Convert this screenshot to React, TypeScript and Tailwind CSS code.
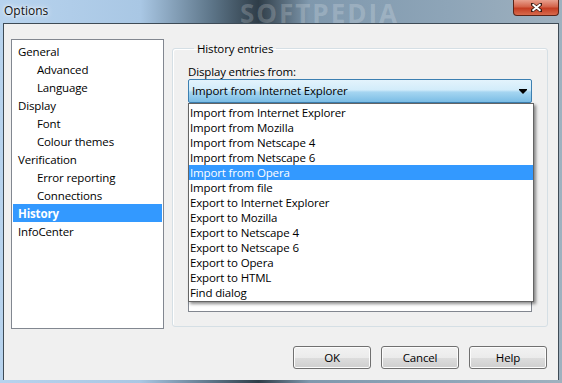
const treeItems = [
  { label: "General", indent: false },
  { label: "Advanced", indent: true },
  { label: "Language", indent: true },
  { label: "Display", indent: false },
  { label: "Font", indent: true },
  { label: "Colour themes", indent: true },
  { label: "Verification", indent: false },
  { label: "Error reporting", indent: true },
  { label: "Connections", indent: true },
  { label: "History", indent: false, selected: true },
  { label: "InfoCenter", indent: false },
]

const listItems = [
  "Import from Internet Explorer",
  "Import from Mozilla",
  "Import from Netscape 4",
  "Import from Netscape 6",
  "Import from Opera",
  "Import from file",
  "Export to Internet Explorer",
  "Export to Mozilla",
  "Export to Netscape 4",
  "Export to Netscape 6",
  "Export to Opera",
  "Export to HTML",
  "Find dialog",
]

const font = { fontFamily: '"Open Sans", "Noto Sans", sans-serif' }

const WinButton = ({ label }: { label: string }) => (
  <button className="w-[78px] h-[23px] rounded-[3px] border border-[#707070] bg-[linear-gradient(#f2f2f2_0%,#ebebeb_50%,#dddddd_50%,#cfcfcf_100%)] shadow-[inset_0_0_0_1px_#fcfcfc] text-[11.5px] tracking-[-0.15px] text-black leading-none">
    {label}
  </button>
)

const App = () => {
  return (
    <div
      className="w-[562px] h-[383px] overflow-hidden flex flex-col bg-[linear-gradient(90deg,#b7d3ee_0%,#a9c7e4_25%,#5b7386_38%,#2f3d48_46%,#7f98ad_55%,#8ea5b8_80%,#9fb1bf_100%)]"
      style={font}
    >
      {/* title bar */}
      <div className="h-[23px] flex items-start relative shrink-0">
        <span className="pl-[4px] pt-[2px] text-[12px] text-[#111] [text-shadow:0_0_6px_#ffffff,0_0_3px_#ffffff]">Options</span>
        <span className="absolute left-[240px] top-0 text-[26px] font-bold tracking-[2px] text-white/20 leading-none">SOFTPEDIA</span>
        <div className="absolute right-[3px] top-0 w-[46px] h-[16px] rounded-b-[4px] border border-t-0 border-[#5a2418] bg-[linear-gradient(#e8a08e_0%,#d4634a_45%,#c43d22_55%,#d86a4c_100%)] flex items-center justify-center">
          <svg width="11" height="9" viewBox="0 0 11 9">
            <path d="M1 1 L10 8 M10 1 L1 8" stroke="#3a1a12" strokeWidth="3.4" strokeLinecap="square" />
            <path d="M1.5 1.2 L9.5 7.8 M9.5 1.2 L1.5 7.8" stroke="#ffffff" strokeWidth="2" />
          </svg>
        </div>
      </div>

      {/* client area */}
      <div className="mx-[3px] h-[357px] bg-[#f0f0f0] border border-b-0 border-[#3e4b56] flex flex-col text-[11.5px] tracking-[-0.15px] text-black">
        <div className="flex mt-[15px] ml-[7px]">
          {/* tree */}
          <div className="w-[153px] h-[290px] bg-white border border-[#828790] pt-[2px] flex flex-col">
            {treeItems.map((item) => (
              <div
                key={item.label}
                className={`h-[18px] leading-[18px] pt-[1px] mx-[1px] ${item.indent ? "pl-[24px]" : "pl-[5px]"} ${item.selected ? "bg-[#3399ff] text-white font-bold" : ""}`}
              >
                {item.label}
              </div>
            ))}
          </div>

          {/* group box */}
          <fieldset className="ml-[8px] mt-[2px] w-[376px] h-[286px] border border-[#d5dfe5] rounded-[3px] shadow-[inset_1px_1px_0_#ffffff] px-[15px]">
            <legend className="ml-[6px] px-[3px] leading-[15px]">History entries</legend>
            <div className="mt-[8px] leading-[15px]">Display entries from:</div>
            <div className="relative">
              <div className="h-[24px] border border-[#3c7fb1] rounded-[2px] bg-[linear-gradient(#e3f3fc_0%,#d2ecfa_45%,#a5d5f1_55%,#7bbde5_100%)] flex items-center pl-[3px] pr-[4px]">
                <span className="flex-1">Import from Internet Explorer</span>
                <svg width="8" height="5" viewBox="0 0 8 5">
                  <polygon points="0,0 8,0 8,1 4,5 0,1" fill="#000" />
                </svg>
              </div>
              {/* listbox behind the open popup */}
              <div className="h-[209px] bg-white border border-[#828790]" />

              {/* dropdown popup */}
              <div className="absolute left-0 top-[24px] w-[346px] bg-white border border-[#646464] shadow-[2px_2px_3px_rgba(0,0,0,0.45)] py-[1px]">
                {listItems.map((item) => (
                  <div
                    key={item}
                    className={`h-[15px] leading-[15px] pl-[1px] ${item === "Import from Opera" ? "bg-[#3399ff] text-white" : ""}`}
                  >
                    {item}
                  </div>
                ))}
              </div>
            </div>
          </fieldset>
        </div>

        {/* buttons */}
        <div className="flex justify-end gap-[10px] mt-[17px] pr-[11px]">
          <WinButton label="OK" />
          <WinButton label="Cancel" />
          <WinButton label="Help" />
        </div>
      </div>
    </div>
  )
}

export default App
